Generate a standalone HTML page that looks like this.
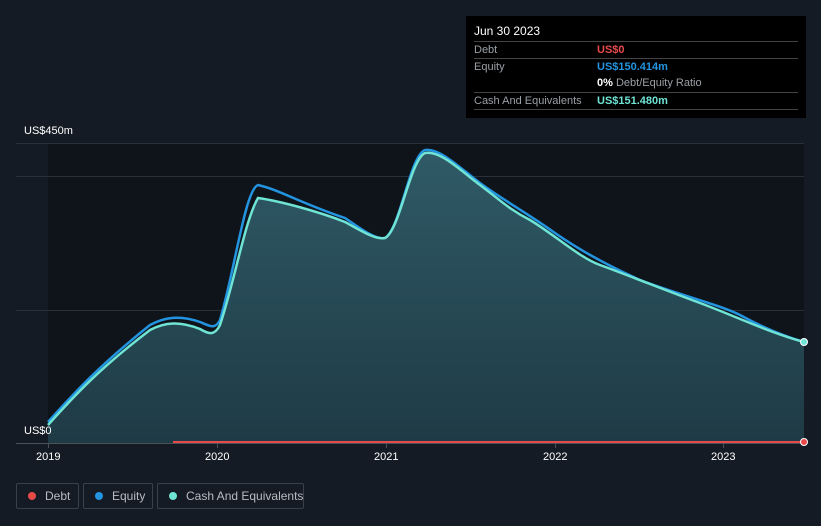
<!DOCTYPE html><html><head><style>
body{margin:0;width:821px;height:526px;background:#151b24;font-family:"Liberation Sans",sans-serif;overflow:hidden;position:relative}
.tt{position:absolute;left:466px;top:16px;width:340px;height:102px;background:#000}
.tt .h{position:absolute;left:8px;top:8px;color:#fff;font-size:12px}
.row{position:absolute;left:8px;width:324px;border-top:1px solid #444;font-size:11px;color:#9aa0a6;height:16px;line-height:16px;white-space:nowrap}
.row b{position:absolute;left:123px;font-weight:bold}
.leg{position:absolute;top:483px;height:26px;border:1px solid #3a404a;border-radius:2px;color:#b8bcc2;font-size:12px;line-height:24px;box-sizing:border-box;white-space:nowrap}
.leg i{position:absolute;left:11px;top:8px;width:8px;height:8px;border-radius:50%}
.leg span{position:absolute;left:28px}
.ax{position:absolute;color:#fff;font-size:11px}
</style></head><body>
<svg width="821" height="526" style="position:absolute;left:0;top:0">
<defs><linearGradient id="g" x1="0" y1="0" x2="0" y2="1"><stop offset="0" stop-color="#2f5a66"/><stop offset="1" stop-color="#1e3a45"/></linearGradient></defs>
<rect x="48" y="143" width="756" height="300" fill="#0f141b"/>
<g stroke="#2a3038" stroke-width="1"><line x1="16" y1="143.5" x2="804" y2="143.5"/><line x1="16" y1="176.5" x2="804" y2="176.5"/><line x1="16" y1="310.5" x2="804" y2="310.5"/><line x1="16" y1="443.5" x2="804" y2="443.5" stroke="#4a5058"/></g>
<g stroke="#4a5058"><line x1="48.5" y1="443" x2="48.5" y2="448"/><line x1="217.5" y1="443" x2="217.5" y2="448"/><line x1="386.5" y1="443" x2="386.5" y2="448"/><line x1="555.5" y1="443" x2="555.5" y2="448"/><line x1="723.5" y1="443" x2="723.5" y2="448"/></g>
<path d="M48 425 C75 395 100 368 150 330 C165 322 180 321 200 329 C210 335 215 335 220 325 C235 280 245 220 258 198 C280 201 320 212 345 222 C360 230 375 240 385 238 C400 230 410 160 425 153 C440 150 460 170 480 185 C500 200 510 210 530 220 C555 235 580 258 600 265 C630 276 670 292 700 303 C735 316 770 333 804 342 L804 443 L48 443 Z" fill="url(#g)"/>
<path d="M48 422 C75 392 100 365 150 325 C165 317 180 315 200 322 C210 326 215 330 220 320 C235 270 245 190 258 185 C280 190 300 203 345 218 C360 228 375 240 385 238 C400 230 410 155 425 150 C440 148 460 168 480 183 C500 198 530 215 555 233 C575 247 600 262 640 280 C680 295 720 305 740 315 C760 326 780 335 804 342" fill="none" stroke="#2394df" stroke-width="2.5"/>
<path d="M48 425 C75 395 100 368 150 330 C165 322 180 321 200 329 C210 335 215 335 220 325 C235 280 245 220 258 198 C280 201 320 212 345 222 C360 230 375 240 385 238 C400 230 410 160 425 153 C440 150 460 170 480 185 C500 200 510 210 530 220 C555 235 580 258 600 265 C630 276 670 292 700 303 C735 316 770 333 804 342" fill="none" stroke="#6fe3d4" stroke-width="2.5"/>
<line x1="173" y1="442" x2="804" y2="442" stroke="#e84a4a" stroke-width="2"/>
<circle cx="804" cy="342" r="3.5" fill="#6fe3d4" stroke="#fff" stroke-width="1"/>
<circle cx="804" cy="442" r="3.5" fill="#e84a4a" stroke="#fff" stroke-width="1"/>
</svg>
<div class="ax" style="left:24px;top:125px">US$450m</div>
<div class="ax" style="left:24px;top:425px">US$0</div>
<div class="ax" style="left:36px;top:451px">2019</div>
<div class="ax" style="left:205px;top:451px">2020</div>
<div class="ax" style="left:374px;top:451px">2021</div>
<div class="ax" style="left:543px;top:451px">2022</div>
<div class="ax" style="left:711px;top:451px">2023</div>
<div class="tt"><div class="h">Jun 30 2023</div>
<div class="row" style="top:25px">Debt<b style="color:#e84a4a">US$0</b></div>
<div class="row" style="top:42px">Equity<b style="color:#2394df">US$150.414m</b></div>
<div class="row" style="top:59px;border-top:none"><b style="color:#fff">0% <span style="color:#9aa0a6;font-weight:normal">Debt/Equity Ratio</span></b></div>
<div class="row" style="top:76px">Cash And Equivalents<b style="color:#6fe3d4">US$151.480m</b></div>
<div class="row" style="top:93px;height:0"></div>
</div>
<div class="leg" style="left:16px;width:63px"><i style="background:#e84a4a"></i><span>Debt</span></div>
<div class="leg" style="left:83px;width:70px"><i style="background:#2394df"></i><span>Equity</span></div>
<div class="leg" style="left:157px;width:147px"><i style="background:#6fe3d4"></i><span>Cash And Equivalents</span></div>
</body></html>
